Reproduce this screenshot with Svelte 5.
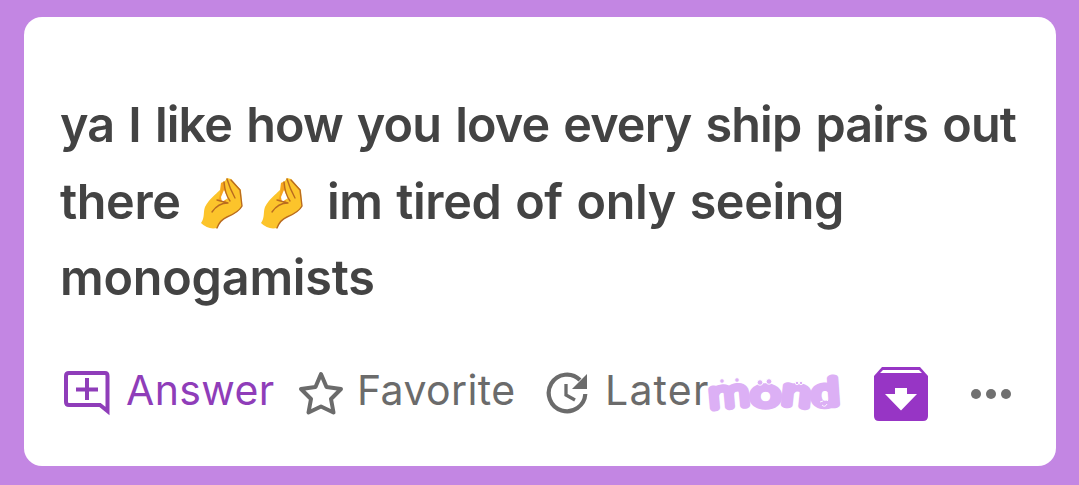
<script>
  const lines = [
    ['ya', 'I', 'like', 'how', 'you', 'love', 'every', 'ship', 'pairs', 'out'],
    ['there', '🤌', '🤌', 'im', 'tired', 'of', 'only', 'seeing'],
    ['monogamists']
  ];
</script>

<main>
  <article>
    <div class="message">
      {#each lines as line, i}
        <p class="l{i}">
          {#each line as word}
            {#if word === '🤌'}
              <svg class="hand" width="44" height="54" viewBox="0 0 44 54" role="img" aria-label="Pinched fingers">
                <path d="M1 46C5 41 3 35 5 30C9 22 15 18 20 13L21 6L25 4L27 1L31 2L41 13L42 29C39 35 32 38 25 41C21 43 19 47 17 51Q8 53 1 46Z" fill="#fcc42b" />
                <path d="M21 6L25 5L26 25L18 24Q21 16 21 6Z" fill="#f6a51e" />
                <path d="M24 13L28 21L22 25L21 20Z" fill="#fff" />
                <path d="M12 35Q18 26 28 26L17 23M24 5Q25 17 30 24M27 2Q30 12 35 21M31 3L40 13L42 29Q39 35 27 40Q20 43 17 51" fill="none" stroke="#b96b20" stroke-width="1.4" stroke-linecap="round" stroke-linejoin="round" />
              </svg>
            {:else}<span>{word}</span>{/if}
          {/each}
        </p>
      {/each}
    </div>

    <div class="actions">
      <button class="answer">
        <svg width="46" height="46" viewBox="0 0 46 46">
          <path d="M5 2H41Q43.500 2 43.500 5V40L36 34H5Q2 34 2 31V5Q2 2 5 2Z" fill="none" stroke="currentColor" stroke-width="4" />
          <path d="M23 7V29M12 18.500H34" stroke="currentColor" stroke-width="4" />
        </svg>
        <span>Answer</span>
      </button>
      <button class="favorite">
        <svg width="46" height="46" viewBox="0 0 46 46">
          <path d="M23 3L28.500 16L43 18L33 28L35.500 41.500L23 35.500L10.500 41.500L13 28L3 18L17.500 16Z" fill="none" stroke="currentColor" stroke-width="4" stroke-linejoin="round" />
        </svg>
        <span>Favorite</span>
      </button>
      <button class="later">
        <svg width="44" height="44" viewBox="0 0 44 44">
          <path d="M34 8A18.300 18.300 0 1 0 39.300 22" fill="none" stroke="currentColor" stroke-width="4.200" />
          <path d="M41 2V17H26Z" fill="currentColor" />
          <path d="M20 12V23L29 28" fill="none" stroke="currentColor" stroke-width="3.300" />
        </svg>
        <span>Later</span>
      </button>
      <svg class="mond" width="134" height="64" viewBox="0 0 134 64" role="img" aria-label="mond">
        <g fill="#dcb0f5" stroke="#dcb0f5" stroke-width="7.500" stroke-linejoin="round" stroke-linecap="round">
          <text transform="translate(2 46) rotate(-5)" textLength="38" lengthAdjust="spacingAndGlyphs">m</text>
          <text transform="translate(43 44)" textLength="27" lengthAdjust="spacingAndGlyphs">o</text>
          <text transform="translate(73 42) rotate(6)" textLength="27" lengthAdjust="spacingAndGlyphs">n</text>
          <text transform="translate(104 44) rotate(-4)" textLength="26" lengthAdjust="spacingAndGlyphs">d</text>
        </g>
        <g fill="#dcb0f5" stroke="#fff" stroke-width="0.900">
          <circle cx="13" cy="19" r="2.300" /><circle cx="28" cy="18" r="2.300" />
          <circle cx="51" cy="20.500" r="2.800" /><circle cx="60" cy="19.500" r="2.800" />
          <circle cx="88" cy="21" r="1.700" /><circle cx="92" cy="21" r="1.700" />
          <path d="M111 40L114 39M117 37L119 39M113 43Q116 46 118 42" />
        </g>
      </svg>
      <button class="archive" aria-label="Archive">
        <svg width="54" height="54" viewBox="0 0 54 54">
          <path d="M8 0H46L54 9V49Q54 54 49 54H5Q0 54 0 49V9Z" fill="#9735c5" />
          <path d="M9 3H45L48 6H6ZM21 21H33V27H43L27 43.500L11 27H21Z" fill="#fff" />
        </svg>
      </button>
      <button class="more" aria-label="More">
        <svg width="42" height="12" viewBox="0 0 42 12">
          <circle cx="6" cy="6" r="5" /><circle cx="21" cy="6" r="5" /><circle cx="36" cy="6" r="5" />
        </svg>
      </button>
    </div>
  </article>
</main>

<style>
  :global(body) { margin: 0; }
  main { box-sizing: border-box; width: 1079px; height: 485px; padding: 17px 23px 19px 24px; background: #c386e3; }
  article { box-sizing: border-box; height: 449px; padding: 70px 39px 0 36px; border-radius: 18px; background: #fff; }
  p { display: flex; justify-content: space-between; margin: 0; height: 76.7px; color: #434343; font: 640 48.500px/76px Inter, sans-serif; white-space: nowrap; }
  .l0 { width: 956px; letter-spacing: -0.9px; word-spacing: 0; }
  .l1 { width: 784px; letter-spacing: -0.4px; }
  .l2 { width: 314px; letter-spacing: -0.2px; }
  .hand { align-self: center; margin: 4px 0 0 6px; }
  .hand + .hand { margin-left: 2px; }
  .hand + span { margin-left: 9px; }
  .actions { display: flex; align-items: center; height: 64px; margin-top: 45px; }
  button { display: flex; align-items: center; padding: 0; border: 0; background: none; color: #6b6b6b; font: 370 41px/52px Inter, sans-serif; letter-spacing: 0.4px; }
  button span { margin-top: -9px; }
  svg { display: block; flex: none; }
  .answer { width: 234px; gap: 16px; margin-left: 4px; color: #8f3db9; }
  .favorite { width: 248px; gap: 13px; }
  .later { width: 163px; gap: 15px; letter-spacing: 1.2px; }
  .mond { margin-left: 0; font: 100 35px Roboto, sans-serif; overflow: visible; }
  .archive { margin-left: 31px; }
  .more { margin-left: 42px; }
  .more circle { fill: #707070; }
</style>
